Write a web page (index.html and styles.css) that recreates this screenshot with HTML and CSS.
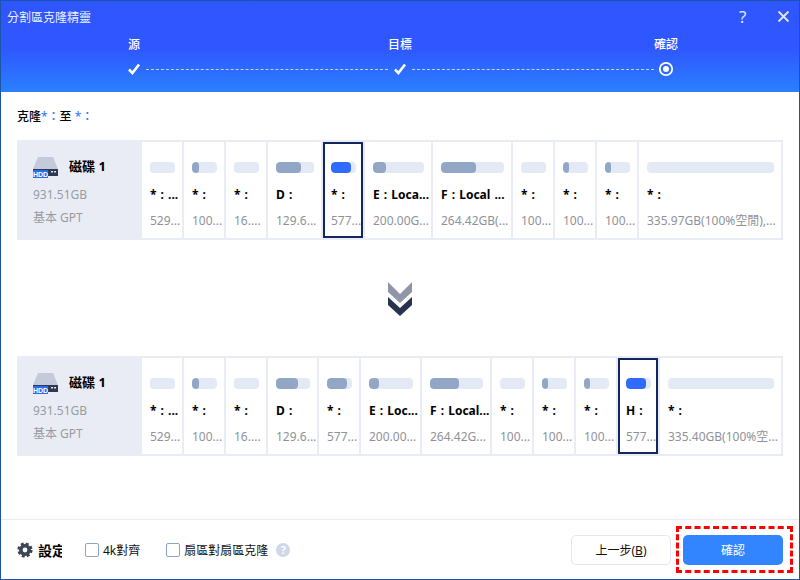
FILE: index.html
```html
<!DOCTYPE html>
<html lang="zh-Hant">
<head>
<meta charset="utf-8">
<title>分割區克隆精靈</title>
<link rel="stylesheet" href="styles.css">
</head>
<body>
<div class="window">
  <header class="head">
    <div class="titlebar">
      <span class="title">分割區克隆精靈</span>
      <span class="help">?</span>
      <svg class="close" width="13" height="13" viewBox="0 0 13 13"><path d="M1.5 1.5l10 10M11.5 1.5l-10 10"/></svg>
    </div>
    <div class="steps">
      <div class="labels"><span>源</span><span>目標</span><span>確認</span></div>
      <div class="track">
        <span class="node"><svg width="14" height="14" viewBox="0 0 14 14"><path class="tick" d="M2 7.500l3.400 3.600L12 2.500"/></svg></span>
        <span class="dash"></span>
        <span class="node"><svg width="14" height="14" viewBox="0 0 14 14"><path class="tick" d="M2 7.500l3.400 3.600L12 2.500"/></svg></span>
        <span class="dash"></span>
        <span class="node"><svg width="16" height="16" viewBox="0 0 16 16"><circle class="ring" cx="8" cy="8" r="6.200"/><circle class="dot" cx="8" cy="8" r="3"/></svg></span>
      </div>
    </div>
  </header>

  <main class="body">
    <p class="clone">克隆<b>*：</b>至 <b>*：</b></p>

    <section class="disk">
      <div class="info">
        <div class="name">
          <svg class="hdd" width="26" height="22" viewBox="0 0 26 22"><path class="hdd-top" d="M5 0h15l5 12H0z"/><path class="hdd-base" d="M0 12h25v7H0z"/><path class="hdd-led" d="M18 14h2v1.500h-2zM21 14h2v1.500h-2z"/><rect class="hdd-tag" x="0" y="13" width="15" height="8"/><text class="hdd-text" x="7.500" y="19.500">HDD</text></svg>
          <strong>磁碟 1</strong>
        </div>
        <div class="meta">931.51GB</div>
        <div class="meta">基本 GPT</div>
      </div>
      <div class="cell w40"><div class="bar"></div><div class="lab">* : ...</div><div class="size">529...</div></div>
      <div class="cell w40"><div class="bar"><i style="width:7px"></i></div><div class="lab">* :</div><div class="size">100...</div></div>
      <div class="cell w40"><div class="bar"></div><div class="lab">* :</div><div class="size">16....</div></div>
      <div class="cell" style="width:53px"><div class="bar"><i style="width:25px"></i></div><div class="lab">D :</div><div class="size">129.6...</div></div>
      <div class="cell w40 sel"><div class="bar"><i style="width:20px"></i></div><div class="lab">* :</div><div class="size">577...</div></div>
      <div class="cell" style="width:66px"><div class="bar"><i style="width:13px"></i></div><div class="lab">E : Loca...</div><div class="size">200.00G...</div></div>
      <div class="cell" style="width:78px"><div class="bar"><i style="width:35px"></i></div><div class="lab">F : Local ...</div><div class="size">264.42GB(...</div></div>
      <div class="cell w40"><div class="bar"></div><div class="lab">* :</div><div class="size">100...</div></div>
      <div class="cell w40"><div class="bar"><i style="width:6px"></i></div><div class="lab">* :</div><div class="size">100...</div></div>
      <div class="cell w40"><div class="bar"><i style="width:6px"></i></div><div class="lab">* :</div><div class="size">100...</div></div>
      <div class="cell" style="width:142px"><div class="bar"></div><div class="lab">* :</div><div class="size">335.97GB(100%空閒),...</div></div>
    </section>

    <div class="arrow">
      <svg width="24" height="34" viewBox="0 0 24 34"><path class="ch1" d="M0 0l12 12L24 0v10L12 21 0 10z"/><path class="ch2" d="M0 15l12 11 12-11v8L12 34 0 23z"/></svg>
    </div>

    <section class="disk">
      <div class="info">
        <div class="name">
          <svg class="hdd" width="26" height="22" viewBox="0 0 26 22"><path class="hdd-top" d="M5 0h15l5 12H0z"/><path class="hdd-base" d="M0 12h25v7H0z"/><path class="hdd-led" d="M18 14h2v1.500h-2zM21 14h2v1.500h-2z"/><rect class="hdd-tag" x="0" y="13" width="15" height="8"/><text class="hdd-text" x="7.500" y="19.500">HDD</text></svg>
          <strong>磁碟 1</strong>
        </div>
        <div class="meta">931.51GB</div>
        <div class="meta">基本 GPT</div>
      </div>
      <div class="cell w40"><div class="bar"></div><div class="lab">* : ...</div><div class="size">529...</div></div>
      <div class="cell w40"><div class="bar"><i style="width:7px"></i></div><div class="lab">* :</div><div class="size">100...</div></div>
      <div class="cell w40"><div class="bar"></div><div class="lab">* :</div><div class="size">16....</div></div>
      <div class="cell" style="width:49px"><div class="bar"><i style="width:22px"></i></div><div class="lab">D :</div><div class="size">129.6...</div></div>
      <div class="cell w40"><div class="bar"><i style="width:20px"></i></div><div class="lab">* :</div><div class="size">577...</div></div>
      <div class="cell" style="width:59px"><div class="bar"><i style="width:10px"></i></div><div class="lab">E : Loc...</div><div class="size">200.00...</div></div>
      <div class="cell" style="width:68px"><div class="bar"><i style="width:29px"></i></div><div class="lab">F : Local...</div><div class="size">264.42G...</div></div>
      <div class="cell w40"><div class="bar"></div><div class="lab">* :</div><div class="size">100...</div></div>
      <div class="cell w40"><div class="bar"><i style="width:6px"></i></div><div class="lab">* :</div><div class="size">100...</div></div>
      <div class="cell w40"><div class="bar"><i style="width:6px"></i></div><div class="lab">* :</div><div class="size">100...</div></div>
      <div class="cell w40 sel"><div class="bar"><i style="width:20px"></i></div><div class="lab">H :</div><div class="size">577...</div></div>
      <div class="cell" style="width:121px"><div class="bar"></div><div class="lab">* :</div><div class="size">335.40GB(100%空...</div></div>
    </section>
  </main>

  <footer class="foot">
    <svg class="gear" width="16" height="16" viewBox="0 0 16 16"><circle class="gear-teeth" cx="8" cy="8" r="6.300"/><circle class="gear-body" cx="8" cy="8" r="4.200"/></svg>
    <span class="setting">設定</span>
    <label class="opt first"><span class="box"></span>4k對齊</label>
    <label class="opt"><span class="box"></span>扇區對扇區克隆</label>
    <span class="q">?</span>
    <button class="btn back">上一步(<u>B</u>)</button>
    <button class="btn ok">確認</button>
    <span class="mark"></span>
  </footer>
</div>
</body>
</html>
```
FILE: styles.css
```css
* { box-sizing: border-box; }
html, body { margin: 0; padding: 0; background: #fff; }
body { font-family: "Noto Sans", "Noto Sans CJK TC", sans-serif; font-size: 12px; color: #000; }
.window { width: 800px; height: 580px; border: 1px solid #1a56a8; display: flex; flex-direction: column; overflow: hidden; background: #fff; }

.head { height: 91px; flex: none; color: #fff; background: linear-gradient(180deg, #2f55ff 0%, #2f57ff 52%, #2a80ff 100%); }
.titlebar { display: flex; align-items: center; height: 31px; padding-left: 6px; }
.title { font-size: 12px; color: #eef2ff; flex: 1; }
.help { font-size: 17px; line-height: 17px; margin-top: -1px; color: #dfe6ff; width: 38px; }
.close { margin-right: 9px; }
.close path { stroke: #dfe6ff; stroke-width: 1.8; fill: none; }

.steps { padding: 0 121px; }
.labels { display: flex; justify-content: space-between; height: 24px; align-items: center; font-weight: 500; font-size: 12px; }
.labels span { width: 24px; text-align: center; }
.track { display: flex; align-items: center; height: 16px; margin-top: 5px; }
.node { width: 24px; display: flex; justify-content: center; }
.dash { flex: 1; border-top: 1px dashed rgba(255,255,255,.7); }
.tick { fill: none; stroke: #fff; stroke-width: 2.6; }
.ring { fill: none; stroke: #fff; stroke-width: 1.8; }
.dot { fill: #fff; }

.body { flex: 1; padding: 0 16px; display: flex; flex-direction: column; }
.clone { margin: 17px 0 15px; height: 16px; line-height: 16px; font-size: 12px; font-weight: 500; }
.clone b { color: #3a7cff; font-weight: 500; }

.disk { height: 100px; flex: none; display: flex; gap: 2px; padding: 2px; background: #e9ecf4; }
.info { width: 121px; flex: none; padding: 15px 0 0 14px; }
.name { display: flex; align-items: center; gap: 10px; height: 22px; }
.name strong { font-size: 13px; font-weight: 700; margin-bottom: 5px; }
.meta { color: #999ba3; font-size: 12px; line-height: 16px; margin-top: 7px; }
.meta:nth-child(2) { margin-top: 8px; }
.hdd-top { fill: #c3cada; }
.hdd-base { fill: #2c3a52; }
.hdd-led { fill: #dfe4ee; }
.hdd-tag { fill: #2a6cf0; }
.hdd-text { fill: #fff; font-size: 7px; font-weight: 700; text-anchor: middle; font-family: "Liberation Sans", sans-serif; }

.cell { background: #fff; padding: 20px 0 0 8px; flex: none; white-space: nowrap; overflow: hidden; }
.w40 { width: 40px; }
.cell.sel { box-shadow: inset 0 0 0 2px #14265f; }
.bar { height: 11px; margin-right: 7px; background: #e3e9f5; border-radius: 4px; overflow: hidden; }
.bar i { display: block; height: 100%; background: #92a7c6; border-radius: 4px; }
.sel .bar i { background: #2f6bff; }
.lab { font-weight: 700; font-size: 12px; line-height: 16px; margin-top: 14px; word-spacing: 1px; }
.size { color: #8f9299; font-size: 12px; line-height: 16px; margin-top: 10px; }

.arrow { flex: none; height: 116px; display: flex; align-items: center; justify-content: center; padding-top: 2px; }
.ch1 { fill: #9096a8; }
.ch2 { fill: #28344f; }

.foot { height: 60px; flex: none; border-top: 1px solid #e8ebf2; display: flex; align-items: center; padding-left: 16px; position: relative; }
.gear { flex: none; }
.gear-teeth { fill: none; stroke: #3d4656; stroke-width: 2.6; stroke-dasharray: 2.900 2.050; }
.gear-body { fill: none; stroke: #3d4656; stroke-width: 3.6; }
.setting { width: 24px; margin-left: 5px; overflow: hidden; white-space: nowrap; font-weight: 700; font-size: 14px; }
.opt { display: flex; align-items: center; gap: 4px; font-size: 12px; color: #111; }
.opt.first { margin-left: 23px; margin-right: 26px; }
.box { width: 14px; height: 14px; border: 1px solid #8ea3c7; border-radius: 2px; background: #fff; }
.q { width: 14px; height: 14px; margin-left: 8px; border-radius: 50%; background: #d0d7e8; color: #fff; font-size: 11px; font-weight: 700; line-height: 14px; text-align: center; }
.btn { width: 100px; height: 30px; border-radius: 5px; font-family: inherit; font-size: 12px; padding: 0; }
.back { margin-left: auto; background: #fff; border: 1px solid #e2e7f2; color: #111; }
.ok { margin-left: 12px; margin-right: 16px; background: #3385ff; border: 0; color: #fff; }
.mark { position: absolute; left: 675px; top: 6px; width: 117px; height: 47px; border: 3px dashed #f00; pointer-events: none; }
```
